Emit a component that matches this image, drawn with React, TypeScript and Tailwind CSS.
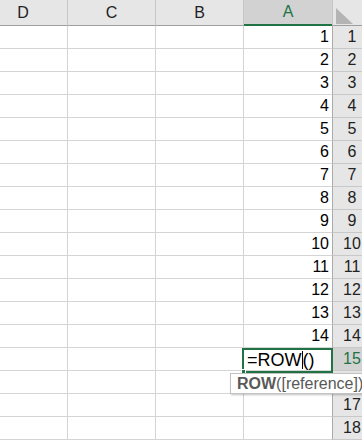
const font = { fontFamily: '"Liberation Sans", Arial, sans-serif' };

const rows = Array.from({ length: 18 }, (_, i) => i + 1);

function HeaderCell({ label, className }: { label: string; className?: string }) {
  return (
    <div
      className={`h-[26px] flex items-center justify-center border-r border-r-[#c6c6c6] border-b border-b-[#9e9e9e] bg-[#e6e6e6] text-[16px] text-[#222] ${className ?? ''}`}
    >
      {label}
    </div>
  );
}

export default function App() {
  return (
    <div className="relative w-[362px] h-[441px] overflow-hidden bg-white select-none" style={font}>
      {/* Column headers (sheet is right-to-left) */}
      <div className="flex w-[400px]">
        <HeaderCell label="D" className="w-[89px] ml-[-21px]" />
        <HeaderCell label="C" className="w-[88px]" />
        <HeaderCell label="B" className="w-[88px]" />
        <div className="w-[88px] h-[26px] flex items-center justify-center bg-[#d2d2d2] border-b-2 border-b-[#217346] text-[16px] text-[#217346]">
          A
        </div>
        <div className="w-[39px] h-[26px] relative bg-[#e6e6e6] border-l border-l-[#c6c6c6] border-b border-b-[#9e9e9e]">
          <svg className="absolute left-[3px] top-[8px]" width="17" height="16" viewBox="0 0 17 16">
            <polygon points="0,0 0,16 17,16" fill="#b4b4b4" />
          </svg>
        </div>
      </div>

      {/* Grid rows */}
      {rows.map((r) => {
        const active = r === 15;
        return (
          <div key={r} className="flex w-[400px] h-[23px]">
            <div className="w-[89px] ml-[-21px] border-r border-b border-[#d4d4d4]" />
            <div className="w-[88px] border-r border-b border-[#d4d4d4]" />
            <div className="w-[88px] border-r border-b border-[#d4d4d4]" />
            <div className="w-[88px] border-b border-[#d4d4d4] flex items-end justify-end pr-[3px] pb-[1px] text-[16px] leading-[20px] text-black">
              {r <= 14 ? r : ''}
            </div>
            <div
              className={`w-[39px] border-l border-l-[#ababab] border-b border-b-[#c8c8c8] flex items-end justify-center pb-[1px] text-[16px] leading-[20px] ${
                active ? 'bg-[#d2d2d2] text-[#217346]' : 'bg-[#e6e6e6] text-[#222]'
              }`}
            >
              {r === 16 ? '' : r}
            </div>
          </div>
        );
      })}

      {/* Active cell A15 being edited */}
      <div className="absolute left-[242px] top-[348px] w-[91px] h-[25px] border-2 border-[#217346] flex items-end pl-[3px] pb-[1px] text-[18px] leading-[20px] text-black">
        <span>=ROW</span>
        <span className="inline-block w-px h-[18px] bg-black mb-[1px]" />
        <span>()</span>
        <div className="absolute left-[-3px] bottom-[-3px] w-[5px] h-[5px] bg-[#217346] border border-white" />
      </div>

      {/* Function argument tooltip */}
      <div className="absolute left-[230px] top-[373px] w-[140px] h-[21px] bg-white border border-[#c2c2c2] shadow-[1px_1px_2px_rgba(0,0,0,0.25)] flex items-center pl-[6px] text-[16px] leading-none text-[#595959] whitespace-nowrap">
        <span className="font-bold">ROW</span>
        <span>([reference])</span>
      </div>
    </div>
  );
}
